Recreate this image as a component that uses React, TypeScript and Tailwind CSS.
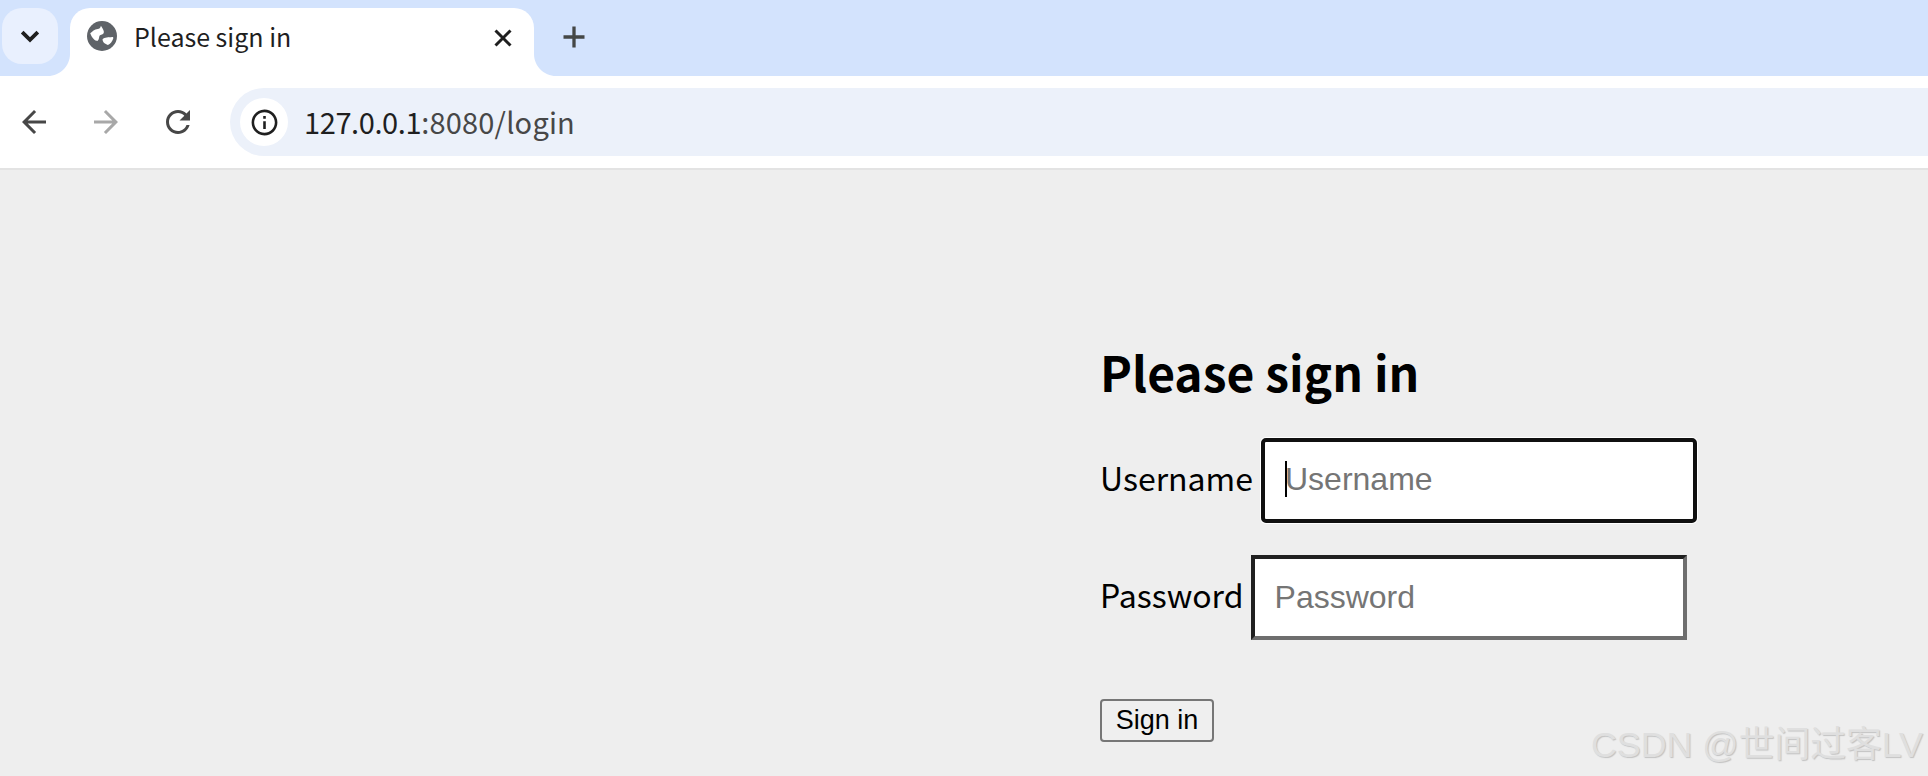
import React from 'react'

const uiFont = "font-['Noto_Sans_CJK_SC','Noto_Sans',sans-serif]"
const formFont = "font-['Liberation_Sans',Arial,sans-serif]"

const ArrowLeft = ({ className }: { className?: string }) => (
  <svg viewBox="0 0 24 24" className={className} fill="currentColor">
    <path d="M20 11H7.83l5.59-5.59L12 4l-8 8 8 8 1.41-1.41L7.83 13H20v-2z" />
  </svg>
)

const Reload = ({ className }: { className?: string }) => (
  <svg viewBox="0 0 24 24" className={className} fill="currentColor">
    <path d="M17.65 6.35C16.2 4.9 14.21 4 12 4c-4.42 0-7.99 3.58-7.99 8s3.57 8 7.99 8c3.73 0 6.84-2.55 7.73-6h-2.08c-.82 2.33-3.04 4-5.65 4-3.31 0-6-2.69-6-6s2.69-6 6-6c1.66 0 3.14.69 4.22 1.78L13 11h7V4l-2.35 2.35z" />
  </svg>
)

const Info = ({ className }: { className?: string }) => (
  <svg viewBox="0 0 24 24" className={className} fill="currentColor">
    <path d="M11 7h2v2h-2zm0 4h2v6h-2zm1-9C6.48 2 2 6.48 2 12s4.48 10 10 10 10-4.48 10-10S17.52 2 12 2zm0 18c-4.41 0-8-3.59-8-8s3.59-8 8-8 8 3.59 8 8-3.59 8-8 8z" />
  </svg>
)

// chrome's default favicon: solid disc with white land shapes
const Globe = ({ className }: { className?: string }) => (
  <svg viewBox="0 0 28 28" className={className}>
    <circle cx="14" cy="14" r="14" fill="#5f6368" />
    <path
      d="M3 11.500c2-1.500 4-4 7-4 1.500 0 2.500-1 3-3 1.500 2.500 3.500 5 2.500 7-1 1.500-3.500 1-4 3-.4 1.500-.5 4.500-2.500 4C6 18 4 14 3 11.500z"
      fill="#ffffff"
    />
    <path d="M14.500 17c2-2 5.500-1.500 9-2 .8 0 1.200.5 1 1.300-.8 2.700-2.700 5-5 6-2.500-1-5-2.300-5-5.300z" fill="#ffffff" />
  </svg>
)

const TabStrip = () => (
  <div className="flex h-[76px] items-start bg-[#d3e3fd] pl-[2px] pt-[8px]">
    <button className="relative z-10 flex h-[56px] w-[56px] items-center justify-center rounded-[20px] bg-[#e9f0fe] text-[#1f1f1f]">
      <svg viewBox="0 0 16 16" className="h-[20px] w-[20px] scale-[1.25]" fill="none" stroke="currentColor" strokeWidth="2.400">
        <path d="M3 5.500l5 5 5-5" />
      </svg>
    </button>
    <div className="relative ml-[12px] flex h-[68px] w-[464px] items-start rounded-t-[20px] bg-white pl-[17px] pt-[13px]">
      {/* flared corners at the foot of the tab */}
      <svg viewBox="0 0 22 22" className="absolute bottom-0 left-[-22px] h-[22px] w-[22px]" fill="#ffffff">
        <path d="M22 0v22H0C12 22 22 12 22 0z" />
      </svg>
      <svg viewBox="0 0 22 22" className="absolute bottom-0 right-[-22px] h-[22px] w-[22px]" fill="#ffffff">
        <path d="M0 0v22h22C10 22 0 12 0 0z" />
      </svg>
      <Globe className="h-[30px] w-[30px]" />
      <span className={`ml-[17px] mt-[-3px] text-[25px] leading-[36px] text-[#1f1f1f] ${uiFont}`}>Please sign in</span>
      <svg viewBox="0 0 16 16" className="ml-auto mr-[21px] mt-[7px] h-[20px] w-[20px] text-[#1f1f1f]" fill="none" stroke="currentColor" strokeWidth="2.400">
        <path d="M2 2l12 12M14 2L2 14" />
      </svg>
    </div>
    <svg viewBox="0 0 16 16" className="ml-[28px] mt-[17px] h-[24px] w-[24px] text-[#444746]" fill="none" stroke="currentColor" strokeWidth="2.200">
      <path d="M8 1v14M1 8h14" />
    </svg>
  </div>
)

const Toolbar = () => (
  <div className="flex h-[94px] items-center border-b-2 border-[#e3e3e3] bg-white pl-[16px]">
    <ArrowLeft className="h-[36px] w-[36px] text-[#474747]" />
    <ArrowLeft className="ml-[36px] h-[36px] w-[36px] rotate-180 text-[#a8a8a8]" />
    <Reload className="ml-[36px] h-[36px] w-[36px] text-[#474747]" />
    <div className="ml-[34px] flex h-[68px] flex-1 items-center rounded-l-[34px] bg-[#ecf1fa] pl-[10px]">
      <div className="flex h-[48px] w-[48px] items-center justify-center rounded-full bg-white">
        <Info className="h-[31px] w-[31px] text-[#1f1f1f]" />
      </div>
      <span className={`ml-[16px] mt-[-3px] text-[29px] leading-[40px] ${uiFont}`}>
        <span className="tracking-[-0.4px] text-[#1f1f1f]">127.0.0.1</span>
        <span className="tracking-[0.2px] text-[#474747]">:8080/login</span>
      </span>
    </div>
  </div>
)

const Field = ({
  label,
  children,
  className,
}: {
  label: string
  children: React.ReactNode
  className?: string
}) => (
  <div className={`flex items-center ${className ?? ''}`}>
    <label className={`mb-[8px] text-[32px] leading-[46px] text-black ${uiFont}`}>{label}</label>
    {children}
  </div>
)

const App = () => (
  <div className="relative flex h-[776px] w-[1928px] flex-col overflow-hidden bg-[#eeeeee]">
    <TabStrip />
    <Toolbar />
    <main className="flex-1 pl-[1100px] pt-[171px]">
      <h1 className={`text-[48px] font-bold leading-[60px] text-black ${uiFont}`}>Please sign in</h1>
      <Field label="Username" className="mt-[36px]">
        <div className="ml-[7px] rounded-[6px] bg-white p-[1px]">
          <div className="relative flex h-[85px] w-[436px] items-center rounded-[5px] border-[4px] border-[#101010] bg-white pb-[3px] pl-[20px]">
            <span className="absolute left-[20px] top-[19px] h-[36px] w-[2px] bg-black" />
            <span className={`text-[32px] text-[#757575] ${formFont}`}>Username</span>
          </div>
        </div>
      </Field>
      <Field label="Password" className="mt-[31px]">
        <div className="ml-[7px] flex h-[85px] w-[436px] items-center border-[4px] border-b-[#6e6e6e] border-l-[#202020] border-r-[#6e6e6e] border-t-[#202020] bg-white pb-[2px] pl-[20px]">
          <span className={`text-[32px] text-[#757575] ${formFont}`}>Password</span>
        </div>
      </Field>
      <button
        className={`mt-[59px] flex h-[43px] w-[114px] items-center justify-center rounded-[4px] border-2 border-[#767676] bg-[#efefef] text-[27px] text-black ${formFont}`}
      >
        Sign in
      </button>
    </main>
    {/* CSDN watermark sits over the page */}
    <div
      className={`absolute bottom-[7px] right-[5px] text-[35.8px] leading-[48px] text-[#dfdfdf] [text-shadow:1px_1px_1px_#c2c2c2] ${formFont}`}
    >
      CSDN @<span className="font-['Noto_Sans_CJK_SC',sans-serif]">世间过客</span>LV
    </div>
  </div>
)

export default App
